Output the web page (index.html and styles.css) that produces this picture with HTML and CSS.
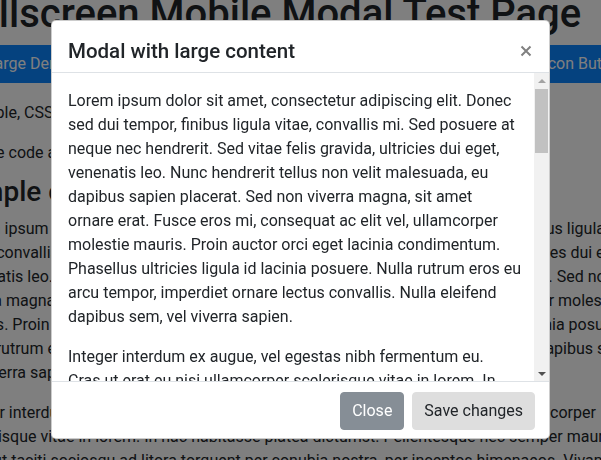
FILE: index.html
```html
<!DOCTYPE html>
<html lang="en">
<head>
  <meta charset="UTF-8" />
  <meta name="viewport" content="width=device-width, initial-scale=1" />
  <title>Fullscreen Mobile Modal Test Page</title>
  <link rel="stylesheet" href="styles.css">
</head>
<body>
  <div class="page">
    <h1>Fullscreen Mobile Modal Test Page</h1>

    <div class="btn-row">
      <button class="btn btn-primary" type="button">Large Demo Modal</button>
      <button class="btn btn-primary" type="button">Icon Button</button>
    </div>

    <p>A simple, CSS-only fullscreen modal for phones and small screens.</p>
    <p class="note">Source code and notes are in the head of this page.</p>

    <h3>Simple content</h3>
    <p>Lorem ipsum dolor sit amet, consectetur adipiscing elit. Donec sed dui tempor, finibus ligula vitae, convallis mi. Sed posuere at neque nec hendrerit. Sed vitae felis gravida, ultricies dui eget, venenatis leo. Nunc hendrerit tellus non velit malesuada, eu dapibus sapien placerat. Sed non viverra magna, sit amet ornare erat. Fusce eros mi, consequat ac elit vel, ullamcorper molestie mauris. Proin auctor orci eget lacinia condimentum. Phasellus ultricies ligula id lacinia posuere. Nulla rutrum eros eu arcu tempor, imperdiet ornare lectus convallis. Nulla eleifend dapibus sem, vel viverra sapien.</p>
    <p>Integer interdum ex augue, vel egestas nibh fermentum eu. Cras ut erat eu nisi ullamcorper scelerisque vitae in lorem. In hac habitasse platea dictumst. Pellentesque nec semper mauris. Nam ut taciti sociosqu ad litora torquent per conubia nostra, per inceptos himenaeos. Vivamus vel tellus sit amet nunc sagittis porta.</p>
  </div>

  <!-- Modal (open) -->
  <div class="modal" role="dialog" aria-labelledby="modalTitle" aria-modal="true">
    <div class="modal-dialog">
      <div class="modal-content">
        <div class="modal-header">
          <h5 class="modal-title" id="modalTitle">Modal with large content</h5>
          <button class="close" type="button" aria-label="Close">
            <svg width="12" height="12" viewBox="0 0 12 12" aria-hidden="true">
              <path d="M1.5 1.5 L10.5 10.5 M10.5 1.5 L1.5 10.5" stroke="currentColor" stroke-width="2" fill="none"/>
            </svg>
          </button>
        </div>

        <div class="modal-scroll">
          <div class="modal-body">
            <p>Lorem ipsum dolor sit amet, consectetur adipiscing elit. Donec sed dui tempor, finibus ligula vitae, convallis mi. Sed posuere at neque nec hendrerit. Sed vitae felis gravida, ultricies dui eget, venenatis leo. Nunc hendrerit tellus non velit malesuada, eu dapibus sapien placerat. Sed non viverra magna, sit amet ornare erat. Fusce eros mi, consequat ac elit vel, ullamcorper molestie mauris. Proin auctor orci eget lacinia condimentum. Phasellus ultricies ligula id lacinia posuere. Nulla rutrum eros eu arcu tempor, imperdiet ornare lectus convallis. Nulla eleifend dapibus sem, vel viverra sapien.</p>
            <p>Integer interdum ex augue, vel egestas nibh fermentum eu.<br>Cras ut erat eu nisi ullamcorper scelerisque vitae in lorem. In hac habitasse platea dictumst. Pellentesque nec semper mauris. Nam ut taciti sociosqu ad litora torquent per conubia nostra, per inceptos himenaeos.</p>
          </div>
          <!-- scrollbar of the body, drawn by hand -->
          <div class="scrollbar" aria-hidden="true">
            <span class="sb-arrow up"></span>
            <span class="sb-thumb"></span>
            <span class="sb-track"></span>
            <span class="sb-arrow down"></span>
          </div>
        </div>

        <div class="modal-footer">
          <button class="btn btn-secondary" type="button">Close</button>
          <button class="btn btn-light" type="button">Save changes</button>
        </div>
      </div>
    </div>
  </div>
</body>
</html>
```
FILE: styles.css
```css
/* Reset and base */
*, *::before, *::after {
  box-sizing: border-box;
}
html, body {
  overflow: hidden;
}
body {
  margin: 0;
  font-family: Roboto, "Liberation Sans", Arial, sans-serif;
  font-size: 16px;
  line-height: 1.5;
  color: #212529;
  background-color: #fff;
}
p {
  margin: 0 0 16px;
}

/* Page behind the modal */
.page {
  width: 690px;
  margin: -10px 0 0 -45px;
}
.page h1 {
  margin: 0 0 7px;
  font-size: 40px;
  font-weight: 500;
  line-height: 48px;
  white-space: nowrap;
}
.page h3 {
  margin: 0 0 8px;
  font-size: 28px;
  font-weight: 500;
  line-height: 1.2;
}
.page .note {
  margin-bottom: 10px;
}
.btn-row {
  display: flex;
  justify-content: space-between;
  padding-left: 19px;
  margin: 0 8px 18px 0;
}

/* Buttons */
.btn {
  font: inherit;
  line-height: 24px;
  padding: 6px 11px;
  border: 1px solid transparent;
  border-radius: 4px;
  white-space: nowrap;
  cursor: pointer;
}
.btn-primary {
  background-color: #0a84ff;
  border-color: #0a84ff;
  color: #fff;
}
.btn-secondary {
  background-color: #868e96;
  border-color: #868e96;
  color: #fff;
}
.btn-light {
  background-color: #dedede;
  border-color: #dedede;
  color: #212529;
}

/* Modal */
.modal {
  position: fixed;
  inset: 0;
  background-color: rgba(0, 0, 0, 0.5);
  z-index: 1050;
}
.modal-dialog {
  width: 499px;
  margin: 20px auto;
}
.modal-content {
  background-color: #fff;
  border: 1px solid rgba(0, 0, 0, 0.2);
  border-radius: 5px;
  overflow: hidden;
}
.modal-header {
  display: flex;
  align-items: center;
  padding: 17px 17px 8px 16px;
  border-bottom: 1px solid #dee2e6;
}
.modal-title {
  margin: 0;
  font-size: 20.5px;
  font-weight: 500;
  line-height: 26px;
}
.close {
  display: flex;
  margin-left: auto;
  padding: 0;
  border: 0;
  background: none;
  color: #808080;
  cursor: pointer;
}

.modal-scroll {
  display: flex;
  height: 308px;
}
.modal-body {
  flex: 1;
  padding: 16px 12px 0 16px;
  overflow: hidden;
}

/* Scrollbar */
.scrollbar {
  display: flex;
  flex-direction: column;
  width: 15px;
  background-color: #f1f1f1;
}
.sb-arrow {
  display: flex;
  align-items: center;
  justify-content: center;
  height: 15px;
}
.sb-arrow::before {
  content: "";
  border-left: 4px solid transparent;
  border-right: 4px solid transparent;
}
.sb-arrow.up::before {
  border-bottom: 4px solid #a3a3a3;
}
.sb-arrow.down::before {
  border-top: 4px solid #505050;
}
.sb-thumb {
  height: 64px;
  margin: 1px 1px 0;
  background-color: #c1c1c1;
}
.sb-track {
  flex: 1;
}

.modal-footer {
  display: flex;
  justify-content: flex-end;
  gap: 8px;
  padding: 10px 14px 8px;
  border-top: 1px solid #dee2e6;
}
```
